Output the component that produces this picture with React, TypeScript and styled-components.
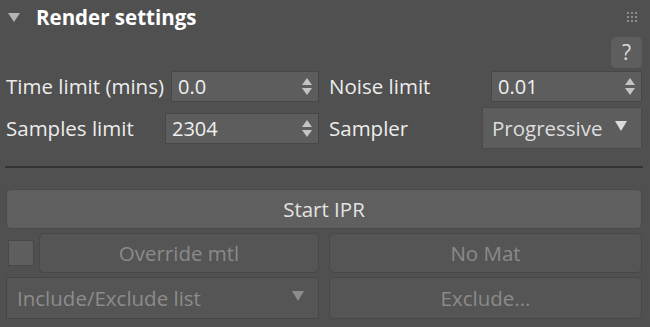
import styled, { createGlobalStyle } from 'styled-components'

const GlobalStyle = createGlobalStyle`
  html, body {
    margin: 0;
    background: #505050;
  }
  body {
    font-family: "Open Sans", "Noto Sans", sans-serif;
    color: #e6e6e6;
  }
`

const Panel = styled('section')`
  width: 650px;
  height: 327px;
  box-sizing: border-box;
  padding: 0 8px 0 6px;
  background: #505050;
  display: flex;
  flex-direction: column;
`
const Header = styled('header')`
  height: 36px;
  display: flex;
  align-items: center;
  padding-left: 2px;
`
const Caret = styled('span')`
  width: 0;
  height: 0;
  border-left: 6px solid transparent;
  border-right: 6px solid transparent;
  border-top: 9px solid #b4b4b4;
  margin-right: 16px;
  margin-top: -2px;
`
const Title = styled('h2')`
  margin: 0;
  font-size: 20.5px;
  font-weight: 700;
  color: #ffffff;
  flex: 1;
  margin-top: -2px;
`
const Grip = styled('span')`
  display: grid;
  grid-template-columns: repeat(3, 2px);
  gap: 2px;
  margin-right: 5px;
  margin-top: -3px;
  i {
    width: 2px;
    height: 2px;
    background: #8c8c8c;
  }
`
const HelpRow = styled('div')`
  height: 33px;
  display: flex;
  justify-content: flex-end;
  align-items: flex-start;
  padding-top: 1px;
`
const HelpButton = styled('button')`
  width: 31px;
  height: 31px;
  border: none;
  border-radius: 5px;
  background: #5e5e5e;
  color: #dcdcdc;
  font-family: inherit;
  font-size: 21px;
  line-height: 1;
  padding: 0;
`
const FieldGrid = styled('div')`
  display: grid;
  grid-template-columns: 1fr 1fr;
  grid-template-rows: 32px 42px;
  column-gap: 10px;
  row-gap: 5px;
`
const Field = styled('div')`
  display: flex;
  align-items: center;
  justify-content: space-between;
`
const Label = styled('span')`
  font-size: 20.5px;
  color: #ececec;
  white-space: nowrap;
`
const SpinBox = styled('div')<{ $width: number }>`
  width: ${p => p.$width}px;
  height: 31px;
  box-sizing: border-box;
  background: #5d5d5d;
  border: 1px solid #474747;
  display: flex;
  align-items: center;
  padding: 0 6px 0 6px;
  font-size: 20px;
  color: #f0f0f0;
`
const SpinValue = styled('span')`
  flex: 1;
`
const Arrows = styled('span')`
  display: flex;
  flex-direction: column;
  gap: 3px;
`
const Arrow = styled('i')<{ $up?: boolean }>`
  width: 0;
  height: 0;
  border-left: 5px solid transparent;
  border-right: 5px solid transparent;
  ${p => p.$up ? 'border-bottom: 7px solid #c4c4c4;' : 'border-top: 7px solid #c4c4c4;'}
`
const Select = styled('div')<{ $width?: number; $dim?: boolean }>`
  ${p => p.$width ? `width: ${p.$width}px;` : ''}
  height: 42px;
  box-sizing: border-box;
  background: ${p => p.$dim ? '#555555' : '#5d5d5d'};
  border: 1px solid ${p => p.$dim ? '#474747' : '#4a4a4a'};
  display: flex;
  align-items: center;
  justify-content: space-between;
  padding: 0 14px 0 ${p => p.$dim ? 10 : 9}px;
  font-size: 20.5px;
  color: ${p => p.$dim ? '#8c8c8c' : '#dedede'};
`
const SelectArrow = styled('i')<{ $dim?: boolean }>`
  width: 0;
  height: 0;
  border-left: 6px solid transparent;
  border-right: 6px solid transparent;
  border-top: 10px solid ${p => p.$dim ? '#8c8c8c' : '#dcdcdc'};
  margin-top: -4px;
`
const Separator = styled('hr')`
  margin: 17px -1px 0 -1px;
  height: 2px;
  border: none;
  background: #333333;
`
const Button = styled('button')<{ $dim?: boolean; $tall?: boolean }>`
  flex: 1;
  height: ${p => p.$tall ? 42 : 40}px;
  box-sizing: border-box;
  border-radius: 5px;
  border: 1px solid ${p => p.$dim ? '#484848' : '#4a4a4a'};
  background: ${p => p.$dim ? '#555555' : '#5f5f5f'};
  color: ${p => p.$dim ? '#8a8a8a' : '#e2e2e2'};
  font-family: inherit;
  font-size: 20.5px;
  padding: 0;
`
const StartRow = styled('div')`
  margin-top: 21px;
  display: flex;
`
const Row = styled('div')`
  margin-top: 4px;
  display: grid;
  grid-template-columns: 1fr 1fr;
  align-items: center;
  column-gap: 10px;
`
const HalfRow = styled('div')`
  display: flex;
  align-items: center;
  gap: 5px;
`
const CheckBox = styled('span')`
  width: 26px;
  height: 26px;
  margin-left: 2px;
  box-sizing: border-box;
  background: #5e5e5e;
  border: 1px solid #484848;
`

export default function App () {
  return (
    <>
      <GlobalStyle />
      <Panel>
        <Header>
          <Caret />
          <Title>Render settings</Title>
          <Grip>{Array.from({ length: 9 }).map((_, i) => <i key={i} />)}</Grip>
        </Header>
        <HelpRow>
          <HelpButton>?</HelpButton>
        </HelpRow>
        <FieldGrid>
          <Field>
            <Label>Time limit (mins)</Label>
            <SpinBox $width={148}>
              <SpinValue>0.0</SpinValue>
              <Arrows><Arrow $up /><Arrow /></Arrows>
            </SpinBox>
          </Field>
          <Field>
            <Label>Noise limit</Label>
            <SpinBox $width={151}>
              <SpinValue>0.01</SpinValue>
              <Arrows><Arrow $up /><Arrow /></Arrows>
            </SpinBox>
          </Field>
          <Field>
            <Label>Samples limit</Label>
            <SpinBox $width={154}>
              <SpinValue>2304</SpinValue>
              <Arrows><Arrow $up /><Arrow /></Arrows>
            </SpinBox>
          </Field>
          <Field>
            <Label>Sampler</Label>
            <Select $width={160}>
              <span>Progressive</span>
              <SelectArrow />
            </Select>
          </Field>
        </FieldGrid>
        <Separator />
        <StartRow>
          <Button>Start IPR</Button>
        </StartRow>
        <Row>
          <HalfRow>
            <CheckBox />
            <Button $dim>Override mtl</Button>
          </HalfRow>
          <HalfRow>
            <Button $dim>No Mat</Button>
          </HalfRow>
        </Row>
        <Row>
          <Select $dim>
            <span>Include/Exclude list</span>
            <SelectArrow $dim />
          </Select>
          <HalfRow>
            <Button $dim $tall>Exclude...</Button>
          </HalfRow>
        </Row>
      </Panel>
    </>
  )
}
